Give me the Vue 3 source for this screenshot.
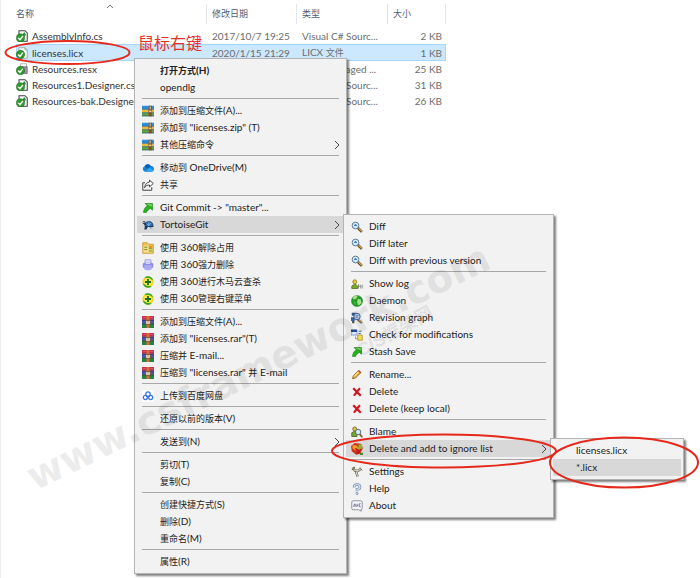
<!-- File list with the shell context menu open down to the ignore-list submenu. -->
<template>
  <svg class="sprite" aria-hidden="true">
    <symbol id="file" viewBox="0 0 16 16">
      <path d="M4 1h8l3 3v11H4z" fill="#fff" stroke="#8d9399" />
      <path d="M12 1v3h3" fill="none" stroke="#8d9399" />
      <circle cx="6" cy="10" r="5.6" fill="#2e9a2b" stroke="#176b1c" stroke-width=".7" />
      <path d="M3 10l2.300 2.500L9.200 7.500" fill="none" stroke="#fff" stroke-width="1.900" />
    </symbol>
    <symbol id="code" viewBox="0 0 16 16">
      <path d="M4 1h8l3 3v11H4z" fill="#fff" stroke="#3c4248" stroke-width="1.400" />
      <path d="M11 4v5M9 7l2-3 2 3" fill="none" stroke="#2e8a38" stroke-width="1.500" />
      <circle cx="6" cy="10.500" r="5.400" fill="#2e9a2b" stroke="#176b1c" stroke-width=".7" />
      <path d="M3 10.500l2.300 2.500L9.200 8" fill="none" stroke="#fff" stroke-width="1.900" />
    </symbol>
    <symbol id="resx" viewBox="0 0 16 16">
      <path d="M6 1h8v5H6z" fill="#fff" stroke="#999" />
      <path d="M8 5h7v9H8z" fill="#a98bb5" stroke="#6e6478" />
      <circle cx="6" cy="10" r="5.600" fill="#2e9a2b" stroke="#176b1c" stroke-width=".7" />
      <path d="M3 10l2.300 2.500L9.200 7.500" fill="none" stroke="#fff" stroke-width="1.900" />
    </symbol>
    <symbol id="zip" viewBox="0 0 16 16">
      <path d="M0 1h16v5H0z" fill="#2f8ed6" />
      <path d="M0 6h16v4H0z" fill="#e9b93a" />
      <path d="M0 10h16v5H0z" fill="#69a63b" />
      <path d="M0 5h16v1H0zM0 10h16v1H0zM0 14h16v1H0z" fill="#255b84" />
      <path d="M9 1h4v14H9z" fill="#8a4a24" />
      <path d="M10 2h2v4h-2z" fill="#d5a765" />
      <path d="M9 7h4v3H9z" fill="#f0d9a0" stroke="#5d3219" stroke-width=".6" />
    </symbol>
    <symbol id="cloud" viewBox="0 0 16 16">
      <path d="M4 13a4 4 0 0 1-.5-7.500A5 5 0 0 1 12 5.500 3.800 3.800 0 0 1 13 13z" fill="#1384d8" />
      <path d="M3.500 5.500A5 5 0 0 1 12 5.500L7 9z" fill="#0b5fb3" />
      <path d="M4 13l6-5.500 5.500 3A3 3 0 0 1 13 13z" fill="#32a7ee" />
    </symbol>
    <symbol id="share" viewBox="0 0 16 16">
      <path d="M4 5H1v10h12v-4" fill="none" stroke="#333" stroke-width="1.200" />
      <path d="M10 1.500l5 4.500-5 4.500V8C7 8 5 9 3.500 11.500 4 7 6.500 4.500 10 4z" fill="#fff" stroke="#333" stroke-width="1.200" />
    </symbol>
    <symbol id="arrow" viewBox="0 0 16 16">
      <path d="M4 2h10v9l-3-2.500C9 10 7 11 6 14H2c0-4 2-7 5-9z" fill="#27b21f" stroke="#117411" stroke-width=".7" />
      <path d="M6 3h7v3z" fill="#85df68" />
    </symbol>
    <symbol id="tortoise" viewBox="0 0 16 16">
      <path d="M4 7c1-4 8-5 10-1l1 4H4z" fill="#326ca8" stroke="#10294c" />
      <path d="M6 6l3 3 3-4M9 4v5" fill="none" stroke="#8ac0e5" />
      <path d="M1 3h3l2 5H4L1 6zM4 9l-1 5h3l2-4M10 10l1 3h2v-4" fill="#173b69" />
      <path d="M11 11h4v4h-4z" fill="#c9cdd0" />
      <circle cx="2.500" cy="4.500" r=".8" fill="#fff" />
    </symbol>
    <symbol id="folder" viewBox="0 0 16 16">
      <path d="M1 1h6l2 2h6v12H1z" fill="#f3c755" stroke="#b98b2b" />
      <path d="M2 5h12v9H2z" fill="#f9de83" />
      <path d="M3 7h4M3 10h4M9 9h5M9 12h5" stroke="#75923d" stroke-width="1.500" />
      <path d="M9 5h5v3H9z" fill="#d9952f" />
    </symbol>
    <symbol id="shred" viewBox="0 0 16 16">
      <path d="M4 1h8v5H4z" fill="#dcd9ff" stroke="#9491e4" />
      <rect x="1" y="5" width="14" height="7" rx="2" fill="#8f8bea" />
      <path d="M3 8h10v6q-5 2-10 0z" fill="#aaa7f5" />
      <path d="M5 6h6" stroke="#eeecff" />
    </symbol>
    <symbol id="plus" viewBox="0 0 16 16">
      <circle cx="8" cy="8" r="7.500" fill="#f3d520" />
      <path d="M3 2a7.500 7.500 0 0 1 12 4L10 3zM1 10a7.500 7.500 0 0 0 12 4L6 12z" fill="#35a52b" />
      <circle cx="8" cy="8" r="5" fill="#ffe943" />
      <path d="M8 4v8M4 8h8" stroke="#176b25" stroke-width="2.400" />
    </symbol>
    <symbol id="rar" viewBox="0 0 16 16">
      <path d="M0 0h16v5H0z" fill="#c22f50" />
      <path d="M0 5h16v5H0z" fill="#4455b8" />
      <path d="M0 10h16v6H0z" fill="#238346" />
      <path d="M0 5h16v1H0zM0 10h16v1H0z" fill="#31233f" />
      <path d="M6 0h4v16H6z" fill="#d8702c" />
      <path d="M1 2h4M11 2h4" stroke="#ec5b77" />
      <path d="M5 6h6v5H5z" fill="#f4ead0" stroke="#754021" />
      <path d="M8 5v4" stroke="#8b5b35" />
    </symbol>
    <symbol id="netdisk" viewBox="0 0 16 16">
      <rect width="16" height="16" rx="3" fill="#fff" />
      <g fill="none" stroke="#3973e8" stroke-width="1.700">
        <circle cx="8" cy="5.500" r="3" />
        <circle cx="4.500" cy="10" r="2.700" />
        <circle cx="11.500" cy="10" r="2.700" />
      </g>
    </symbol>
    <symbol id="lens" viewBox="0 0 16 16">
      <path d="M9 9l5.500 5.500" stroke="#4f3b1d" stroke-width="3.400" />
      <path d="M10 9.500l4.500 4.500" stroke="#d9a646" stroke-width="1.800" />
      <circle cx="6" cy="6" r="4.500" fill="#d3eaf8" stroke="#52718f" stroke-width="1.200" />
      <path d="M4 7l2-3 2 3M5 6h2" fill="none" stroke="#2867a3" />
    </symbol>
    <symbol id="log" viewBox="0 0 16 16">
      <circle cx="5" cy="5" r="2.700" fill="#e5c52d" stroke="#756a14" stroke-width=".8" />
      <path d="M1 14v-3q4-5 8 0v3z" fill="#7ba925" stroke="#476816" />
      <path d="M10 8v6M10 11h3M13 9v5M15 9v5" stroke="#777" />
    </symbol>
    <symbol id="globe" viewBox="0 0 16 16">
      <circle cx="8" cy="8" r="7.400" fill="#229d27" stroke="#16751c" stroke-width=".6" />
      <path d="M2 4q3-4 7-3L7 5 4 6zM9 5l4 1 1 5-4 3-2-4z" fill="#a5e28b" />
      <path d="M3 8l3 2v4z" fill="#57c443" />
    </symbol>
    <symbol id="graph" viewBox="0 0 16 16">
      <path d="M1 1h6v4H1zM0 7h5v5H0z" fill="#335fa5" />
      <path d="M3 12v3M9 10l5.500 4.500" stroke="#4e4b45" stroke-width="3" />
      <path d="M10 10l4.500 4" stroke="#d6a44b" stroke-width="1.600" />
      <circle cx="8" cy="6" r="4.200" fill="#c9dff3" stroke="#42628f" stroke-width="1.300" />
      <path d="M6 5h4M6 7h3" stroke="#335fa5" />
    </symbol>
    <symbol id="check" viewBox="0 0 16 16">
      <path d="M0 1h8v7H0z" fill="#dceaff" stroke="#6984b4" />
      <path d="M0 1h8v3H0z" fill="#214a91" />
      <path d="M10 3h4M10 6h3" stroke="#426397" stroke-width="1.500" />
      <path d="M9 8h6v7H9z" fill="#f6dc52" stroke="#a88b22" />
      <path d="M6 10v3h3" fill="none" stroke="#777" />
    </symbol>
    <symbol id="pencil" viewBox="0 0 16 16">
      <path d="M2 13l1-4 7-7 3 3-7 7z" fill="#eca72c" stroke="#7f5417" />
      <path d="M4 10l7-7" stroke="#ffe08b" stroke-width="1.500" />
      <path d="M10 2l3 3" stroke="#b44827" stroke-width="2" />
    </symbol>
    <symbol id="cross" viewBox="0 0 16 16">
      <path d="M3 3q3 3 10 10M12 3q-4 4-8 10" fill="none" stroke="#d6141d" stroke-width="3" />
    </symbol>
    <symbol id="blame" viewBox="0 0 16 16">
      <circle cx="5" cy="4" r="2.700" fill="#e8c43a" stroke="#675319" />
      <path d="M1 14V9q4-4 7 0v5z" fill="#78a52d" stroke="#3e5c1e" />
      <path d="M11 10l4 5" stroke="#82602b" stroke-width="2.500" />
      <circle cx="9.500" cy="8" r="3.600" fill="#d6eaf6" stroke="#4b6882" stroke-width="1.200" />
    </symbol>
    <symbol id="ignored" viewBox="0 0 16 16">
      <path d="M0 4l5-4 8 1 3 6-5 8H6L1 11z" fill="#cd331d" />
      <path d="M2 3h5l4 4-5 3-4-3z" fill="#ef9f23" />
      <path d="M10 2h5v7h-5z" fill="#86b83a" />
      <path d="M6 7l8 8M14 8l-7 7" stroke="#c21717" stroke-width="2.300" />
      <path d="M12 13h4v3h-4z" fill="#3d902f" />
    </symbol>
    <symbol id="tools" viewBox="0 0 16 16">
      <path d="M2 2l3 4h5l3-2M9 6l-2 3 2 5" fill="none" stroke="#5f625d" stroke-width="3" />
      <path d="M2 2l3 4h5l3-2M9 6l-2 3 2 5" fill="none" stroke="#d5cfbb" stroke-width="1.500" />
      <path d="M1 5l3-1 1-3M12 2l3 4" fill="none" stroke="#716448" stroke-width="1.300" />
    </symbol>
    <symbol id="help" viewBox="0 0 16 16">
      <path d="M4 6q0-4 4-4t4 3.500Q12 8 8 8.500V11" fill="none" stroke="#6c87a3" stroke-width="3.400" />
      <path d="M4 6q0-4 4-4t4 3.500Q12 8 8 8.500V11" fill="none" stroke="#d9e8f5" stroke-width="1.600" />
      <circle cx="8" cy="14" r="1.500" fill="#d9e8f5" stroke="#6c87a3" />
    </symbol>
    <symbol id="about" viewBox="0 0 16 16">
      <path d="M3 1h10q2 0 2 2v8q0 2-2 2l1 2-4-2H3q-2 0-2-2V3q0-2 2-2z" fill="#f5f6fb" stroke="#73768c" />
      <path d="M3 9l2-4 2 4M4 8h2M8 5v4M8 7h2M13 5h-2v4h2" fill="none" stroke="#5a5f78" />
    </symbol>
  </svg>

  <main class="explorer">
    <table class="files">
      <thead>
        <tr>
          <th v-for="col in columns" :key="col.label" :class="col.key">
            <button type="button">{{ col.label }}</button>
            <svg v-if="col.sorted" class="sort" viewBox="0 0 8 4">
              <path d="M1 4l3-3 3 3" fill="none" stroke="#777" />
            </svg>
          </th>
        </tr>
      </thead>
      <tbody>
        <tr v-for="file in files" :key="file.name" :class="{ selected: file.name === selected }">
          <td class="name">
            <span class="file-name">
              <svg class="icon"><use :href="'#' + file.icon" /></svg>{{ file.name }}
            </span>
          </td>
          <td class="date">{{ file.date }}</td>
          <td class="type">
            <span v-for="(run, r) in runs(file.type)" :key="r" :class="{ han: run.han }">{{ run.text }}</span>
          </td>
          <td class="size">{{ file.size }}</td>
        </tr>
      </tbody>
    </table>
    <p class="note">鼠标右键</p>

    <ul v-for="menu in menus" :key="menu.id" class="menu" :class="menu.id" role="menu">
      <template v-for="(item, i) in menu.items" :key="i">
        <li v-if="item === null" class="separator" role="separator"></li>
        <li v-else role="none">
          <button
            type="button"
            role="menuitem"
            class="item"
            :class="{ open: item.open, strong: item.strong }"
            :aria-haspopup="item.sub ? 'menu' : undefined"
          >
            <svg class="icon" aria-hidden="true"><use v-if="item.icon" :href="'#' + item.icon" /></svg>
            <span class="label">
              <span v-for="(run, r) in runs(item.label)" :key="r" :class="{ han: run.han }">{{ run.text }}</span>
            </span>
            <svg v-if="item.sub" class="chevron" viewBox="0 0 6 10">
              <path d="M1 1l4 4-4 4" fill="none" stroke="#444" />
            </svg>
          </button>
        </li>
      </template>
    </ul>

    <svg class="marks" width="700" height="578" viewBox="0 0 700 578" aria-hidden="true">
      <g class="watermark">
        <text transform="translate(35 491) rotate(-26)" class="site">www.csframework.com</text>
        <text transform="translate(361 357) rotate(-29)" class="brand">C/S框架网</text>
      </g>
      <g fill="none" stroke="#e5291c" stroke-width="2">
        <ellipse cx="67.500" cy="52.500" rx="62" ry="11.500" />
        <ellipse cx="444" cy="451" rx="112" ry="16.500" />
        <ellipse cx="624" cy="462.500" rx="74" ry="25" />
      </g>
    </svg>
  </main>
</template>

<script setup>
import { ref } from "vue";

const selected = ref("licenses.licx");

const columns = [
  { key: "name", label: "名称", sorted: true },
  { key: "date", label: "修改日期" },
  { key: "type", label: "类型" },
  { key: "size", label: "大小" },
];

const files = [
  { name: "AssemblyInfo.cs", icon: "code", date: "2017/10/7 19:25", type: "Visual C# Sourc...", size: "2 KB" },
  { name: "licenses.licx", icon: "file", date: "2020/1/15 21:29", type: "LICX 文件", size: "1 KB" },
  { name: "Resources.resx", icon: "resx", date: "", type: ".NET Managed ...", size: "25 KB" },
  { name: "Resources1.Designer.cs", icon: "code", date: "", type: "Visual C# Sourc...", size: "31 KB" },
  { name: "Resources-bak.Designer.cs", icon: "code", date: "", type: "Visual C# Sourc...", size: "26 KB" },
];

// null stands for a separator line
const menus = [
  {
    id: "shell",
    items: [
      { label: "打开方式(H)", strong: true },
      { label: "opendlg" },
      null,
      { label: "添加到压缩文件(A)...", icon: "zip" },
      { label: '添加到 "licenses.zip" (T)', icon: "zip" },
      { label: "其他压缩命令", icon: "zip", sub: true },
      null,
      { label: "移动到 OneDrive(M)", icon: "cloud" },
      { label: "共享", icon: "share" },
      null,
      { label: 'Git Commit -> "master"...', icon: "arrow" },
      { label: "TortoiseGit", icon: "tortoise", sub: true, open: true },
      null,
      { label: "使用 360解除占用", icon: "folder" },
      { label: "使用 360强力删除", icon: "shred" },
      { label: "使用 360进行木马云查杀", icon: "plus" },
      { label: "使用 360管理右键菜单", icon: "plus" },
      null,
      { label: "添加到压缩文件(A)...", icon: "rar" },
      { label: '添加到 "licenses.rar"(T)', icon: "rar" },
      { label: "压缩并 E-mail...", icon: "rar" },
      { label: '压缩到 "licenses.rar" 并 E-mail', icon: "rar" },
      null,
      { label: "上传到百度网盘", icon: "netdisk" },
      null,
      { label: "还原以前的版本(V)" },
      null,
      { label: "发送到(N)", sub: true },
      null,
      { label: "剪切(T)" },
      { label: "复制(C)" },
      null,
      { label: "创建快捷方式(S)" },
      { label: "删除(D)" },
      { label: "重命名(M)" },
      null,
      { label: "属性(R)" },
    ],
  },
  {
    id: "git",
    items: [
      { label: "Diff", icon: "lens" },
      { label: "Diff later", icon: "lens" },
      { label: "Diff with previous version", icon: "lens" },
      null,
      { label: "Show log", icon: "log" },
      { label: "Daemon", icon: "globe" },
      { label: "Revision graph", icon: "graph" },
      { label: "Check for modifications", icon: "check" },
      { label: "Stash Save", icon: "arrow" },
      null,
      { label: "Rename...", icon: "pencil" },
      { label: "Delete", icon: "cross" },
      { label: "Delete (keep local)", icon: "cross" },
      null,
      { label: "Blame", icon: "blame" },
      { label: "Delete and add to ignore list", icon: "ignored", sub: true, open: true },
      null,
      { label: "Settings", icon: "tools" },
      { label: "Help", icon: "help" },
      { label: "About", icon: "about" },
    ],
  },
  {
    id: "ignore",
    items: [{ label: "licenses.licx" }, { label: "*.licx", open: true }],
  },
];

// Chinese runs are set one size below the Latin ones.
function runs(text) {
  return text
    .split(/([\u3400-\u9fff]+)/)
    .filter(Boolean)
    .map((part) => ({ text: part, han: /[\u3400-\u9fff]/.test(part) }));
}
</script>

<style>
body {
  margin: 0;
  background: #fff;
}
</style>

<style scoped>
.sprite {
  position: absolute;
  width: 0;
  height: 0;
}
.explorer {
  position: relative;
  min-height: 100vh;
  box-sizing: border-box;
  padding: 4px 0 0 15px;
  overflow: hidden;
  border-left: 1px solid #eee;
  font-family: Lato, "Open Sans", "Noto Sans CJK SC", sans-serif;
  font-size: 10px;
  color: #222;
}
button {
  padding: 0;
  border: 0;
  background: none;
  font: inherit;
  color: inherit;
  text-align: left;
  white-space: pre;
}
.han {
  font-family: "Noto Sans CJK SC", sans-serif;
  font-size: 9px;
}
.icon {
  flex: none;
  width: 12px;
  height: 12px;
}

.files {
  border-collapse: collapse;
  table-layout: fixed;
  width: 430px;
}
.files th {
  position: relative;
  height: 20px;
  padding: 0 0 4px;
  box-sizing: content-box;
  font-family: "Noto Sans CJK SC", sans-serif;
  font-size: 9px;
  font-weight: 400;
  line-height: 20px;
  text-align: left;
  color: #4c607a;
  background: linear-gradient(#e2e6ea, #e2e6ea) right top / 1px 20px no-repeat;
}
th.name {
  width: 191px;
}
th.date {
  width: 90px;
}
th.type {
  width: 91px;
}
.files th button {
  padding-left: 5px;
}
.files th.name button {
  padding-left: 0;
}
.sort {
  position: absolute;
  top: 0;
  left: 90px;
  width: 8px;
  height: 4px;
}
.files td {
  height: 16px;
  padding: 0 0 0 5px;
  line-height: 16px;
  white-space: nowrap;
  color: #6d6d6d;
}
.files td.name {
  padding-left: 0;
  color: #333;
}
.files td.size {
  padding-right: 4px;
  text-align: right;
}
.file-name {
  display: flex;
  align-items: center;
  gap: 4px;
}
.selected {
  background: #cce8ff;
  box-shadow: inset 0 0 0 1px #a6d6fb;
}
.note {
  position: absolute;
  top: 30px;
  left: 137px;
  margin: 0;
  font-family: "Noto Sans CJK SC", sans-serif;
  font-size: 16px;
  line-height: 24px;
  color: #e8302a;
}

.menu {
  position: absolute;
  box-sizing: border-box;
  margin: 0;
  padding: 3px 2px;
  list-style: none;
  border: 1px solid #b4b4b4;
  background: #f2f2f2;
  box-shadow: 2px 2px 2px rgba(0, 0, 0, 0.5);
}
.shell {
  top: 58px;
  left: 133px;
  width: 213px;
}
.git {
  top: 214px;
  left: 342px;
  width: 211px;
}
.ignore {
  top: 438px;
  left: 549px;
  width: 134px;
}
.item {
  display: flex;
  align-items: center;
  gap: 6px;
  width: 100%;
  height: 17px;
  padding: 0 4px 0 5px;
  line-height: 17px;
}
.item.open {
  background: #d8d8d8;
}
.item.strong {
  font-weight: 700;
}
.label {
  flex: 1;
}
.chevron {
  width: 6px;
  height: 10px;
}
.separator {
  height: 1px;
  margin: 2px 5px 3px;
  background: #a8a8a8;
}

.marks {
  position: absolute;
  top: 0;
  left: -1px;
  pointer-events: none;
}
.watermark {
  fill: #000;
  opacity: 0.07;
  font-weight: 700;
}
.site {
  font-family: "DejaVu Sans", sans-serif;
  font-size: 39px;
}
.brand {
  font-family: "Liberation Sans", "Noto Sans CJK SC", sans-serif;
  font-size: 18px;
}
</style>
